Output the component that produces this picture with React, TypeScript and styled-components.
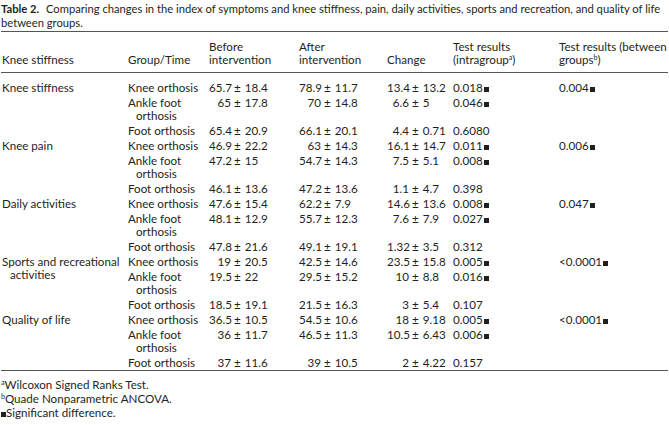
import React from "react";
import styled, { createGlobalStyle } from "styled-components";

const Global = createGlobalStyle`
  html, body { margin: 0; padding: 0; background: #fff; }
  body { font-family: "Lato", "Open Sans", sans-serif; color: #231f20; }
`;

const Page = styled.div`
  width: 669px;
  padding: 2px 0 0 1px;
  box-sizing: border-box;
`;

const Caption = styled.p`
  margin: 0;
  font-size: 11.2px;
  line-height: 13.5px;
  padding-bottom: 2px;
  white-space: nowrap;
`;

const Bold = styled.b`
  font-weight: 700;
  margin-right: 4px;
`;

const Table = styled.table`
  width: 667px;
  border-collapse: collapse;
  table-layout: fixed;
  font-size: 11.6px;
  line-height: 13px;
  border-top: 1px solid #555;
  border-bottom: 1px solid #555;
`;

const Th = styled.th`
  text-align: left;
  font-weight: 400;
  vertical-align: bottom;
  padding: 8px 0 6px 1px;
  border-bottom: 1px solid #555;
  white-space: nowrap;
`;

const Td = styled.td<{ $first?: boolean }>`
  vertical-align: top;
  padding: ${(p) => (p.$first ? "8px" : "1px")} 0 1px 1px;
`;

const Hang = styled.div`
  padding-left: 8px;
  text-indent: -8px;
`;

const Split = styled.div<{ $w: number }>`
  display: grid;
  grid-template-columns: ${(p) => p.$w}px auto;
  column-gap: 3px;
  justify-content: start;
`;

const Left = styled.span`
  text-align: right;
  white-space: nowrap;
`;

const Right = styled.span`
  white-space: nowrap;
  word-spacing: 1px;
`;

const Sig = styled.span`
  display: inline-block;
  width: 5px;
  height: 5px;
  background: #231f20;
  margin-left: 1px;
  vertical-align: baseline;
`;

const Sup = styled.sup`
  font-size: 7px;
  line-height: 0;
  vertical-align: 4px;
`;

const Notes = styled.div`
  font-size: 11.6px;
  line-height: 14px;
  padding-top: 7px;
`;

const Note = styled.div``;

type Row = {
  group: string;
  before: string;
  after: string;
  change: string;
  intra: string;
  intraSig: boolean;
};

type Block = {
  label: string;
  between: string;
  rows: Row[];
};

const data: Block[] = [
  {
    label: "Knee stiffness",
    between: "0.004",
    rows: [
      { group: "Knee orthosis", before: "65.7 ± 18.4", after: "78.9 ± 11.7", change: "13.4 ± 13.2", intra: "0.018", intraSig: true },
      { group: "Ankle foot orthosis", before: "65 ± 17.8", after: "70 ± 14.8", change: "6.6 ± 5", intra: "0.046", intraSig: true },
      { group: "Foot orthosis", before: "65.4 ± 20.9", after: "66.1 ± 20.1", change: "4.4 ± 0.71", intra: "0.6080", intraSig: false },
    ],
  },
  {
    label: "Knee pain",
    between: "0.006",
    rows: [
      { group: "Knee orthosis", before: "46.9 ± 22.2", after: "63 ± 14.3", change: "16.1 ± 14.7", intra: "0.011", intraSig: true },
      { group: "Ankle foot orthosis", before: "47.2 ± 15", after: "54.7 ± 14.3", change: "7.5 ± 5.1", intra: "0.008", intraSig: true },
      { group: "Foot orthosis", before: "46.1 ± 13.6", after: "47.2 ± 13.6", change: "1.1 ± 4.7", intra: "0.398", intraSig: false },
    ],
  },
  {
    label: "Daily activities",
    between: "0.047",
    rows: [
      { group: "Knee orthosis", before: "47.6 ± 15.4", after: "62.2 ± 7.9", change: "14.6 ± 13.6", intra: "0.008", intraSig: true },
      { group: "Ankle foot orthosis", before: "48.1 ± 12.9", after: "55.7 ± 12.3", change: "7.6 ± 7.9", intra: "0.027", intraSig: true },
      { group: "Foot orthosis", before: "47.8 ± 21.6", after: "49.1 ± 19.1", change: "1.32 ± 3.5", intra: "0.312", intraSig: false },
    ],
  },
  {
    label: "Sports and recreational activities",
    between: "<0.0001",
    rows: [
      { group: "Knee orthosis", before: "19 ± 20.5", after: "42.5 ± 14.6", change: "23.5 ± 15.8", intra: "0.005", intraSig: true },
      { group: "Ankle foot orthosis", before: "19.5 ± 22", after: "29.5 ± 15.2", change: "10 ± 8.8", intra: "0.016", intraSig: true },
      { group: "Foot orthosis", before: "18.5 ± 19.1", after: "21.5 ± 16.3", change: "3 ± 5.4", intra: "0.107", intraSig: false },
    ],
  },
  {
    label: "Quality of life",
    between: "<0.0001",
    rows: [
      { group: "Knee orthosis", before: "36.5 ± 10.5", after: "54.5 ± 10.6", change: "18 ± 9.18", intra: "0.005", intraSig: true },
      { group: "Ankle foot orthosis", before: "36 ± 11.7", after: "46.5 ± 11.3", change: "10.5 ± 6.43", intra: "0.006", intraSig: true },
      { group: "Foot orthosis", before: "37 ± 11.6", after: "39 ± 10.5", change: "2 ± 4.22", intra: "0.157", intraSig: false },
    ],
  },
];

const Pm: React.FC<{ v: string; w: number }> = ({ v, w }) => {
  const [a, b] = v.split(" ± ");
  return (
    <Split $w={w}>
      <Left>{a}</Left>
      <Right>± {b}</Right>
    </Split>
  );
};

export default function App() {
  return (
    <Page>
      <Global />
      <Caption>
        <Bold>Table 2.</Bold> Comparing changes in the index of symptoms and knee stiffness, pain, daily activities, sports and recreation, and quality of life
        <br />
        between groups.
      </Caption>
      <Table>
        <colgroup>
          <col style={{ width: 126 }} />
          <col style={{ width: 81 }} />
          <col style={{ width: 90 }} />
          <col style={{ width: 88 }} />
          <col style={{ width: 66 }} />
          <col style={{ width: 106 }} />
          <col />
        </colgroup>
        <thead>
          <tr>
            <Th>Knee stiffness</Th>
            <Th>Group/Time</Th>
            <Th>Before<br />intervention</Th>
            <Th>After<br />intervention</Th>
            <Th>Change</Th>
            <Th>
              Test results<br />(intragroup<Sup>a</Sup>)
            </Th>
            <Th>
              Test results (between<br />groups<Sup>b</Sup>)
            </Th>
          </tr>
        </thead>
        <tbody>
          {data.map((block, bi) =>
            block.rows.map((r, ri) => {
              const first = bi === 0 && ri === 0;
              return (
                <tr key={`${bi}-${ri}`}>
                  {ri === 0 && (
                    <Td rowSpan={3} $first={first}>
                      <Hang>{block.label}</Hang>
                    </Td>
                  )}
                  <Td $first={first}>
                    <Hang>{r.group}</Hang>
                  </Td>
                  <Td $first={first}>
                    <Pm v={r.before} w={22} />
                  </Td>
                  <Td $first={first}>
                    <Pm v={r.after} w={22} />
                  </Td>
                  <Td $first={first}>
                    <Pm v={r.change} w={22} />
                  </Td>
                  <Td $first={first}>
                    {r.intra}
                    {r.intraSig && <Sig />}
                  </Td>
                  {ri === 0 && (
                    <Td rowSpan={3} $first={first}>
                      {block.between}
                      <Sig />
                    </Td>
                  )}
                </tr>
              );
            })
          )}
        </tbody>
      </Table>
      <Notes>
        <Note>
          <Sup>a</Sup>Wilcoxon Signed Ranks Test.
        </Note>
        <Note>
          <Sup>b</Sup>Quade Nonparametric ANCOVA.
        </Note>
        <Note>
          <Sig style={{ marginLeft: 0 }} />Significant difference.
        </Note>
      </Notes>
    </Page>
  );
}
